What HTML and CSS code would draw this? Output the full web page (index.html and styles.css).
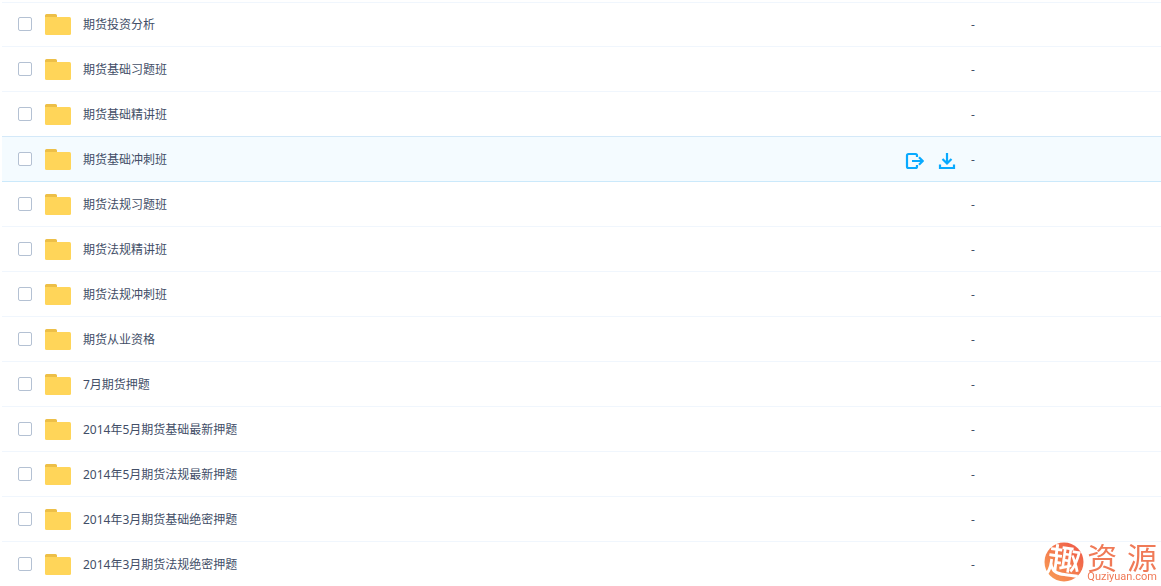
FILE: index.html
```
<!DOCTYPE html>
<html lang="zh-CN">
<head>
<meta charset="utf-8">
<meta name="viewport" content="width=device-width, initial-scale=1">
<title>期货</title>
<link rel="stylesheet" href="styles.css">
</head>
<body>
<svg class="defs" width="0" height="0" aria-hidden="true">
  <symbol id="folder" viewBox="0 0 26 21">
    <path d="M0 1.5A1.5 1.5 0 0 1 1.500 0H10.500A1.500 1.500 0 0 1 12 1.500V6H0Z" fill="#edbf47"/>
    <path d="M0 3H24.500A1.500 1.500 0 0 1 26 4.500V19.500A1.500 1.500 0 0 1 24.500 21H1.500A1.500 1.500 0 0 1 0 19.500Z" fill="#ffd559"/>
  </symbol>
</svg>
<ul class="files">
  <li class="row"><input class="check" type="checkbox" id="f1"><svg class="folder"><use href="#folder"/></svg><label class="name" for="f1">期货投资分析</label><span class="size">-</span></li>
  <li class="row"><input class="check" type="checkbox" id="f2"><svg class="folder"><use href="#folder"/></svg><label class="name" for="f2">期货基础习题班</label><span class="size">-</span></li>
  <li class="row"><input class="check" type="checkbox" id="f3"><svg class="folder"><use href="#folder"/></svg><label class="name" for="f3">期货基础精讲班</label><span class="size">-</span></li>
  <li class="row row-active"><input class="check" type="checkbox" id="f4"><svg class="folder"><use href="#folder"/></svg><label class="name" for="f4">期货基础冲刺班</label>
    <span class="actions">
      <button class="action" type="button" aria-label="分享"><svg width="20" height="18" viewBox="0 0 20 18" fill="none" stroke="#09aaff" stroke-width="2.200"><path d="M13 5V3.500Q13 2 11.500 2H4.500Q3 2 3 3.500V14.500Q3 16 4.500 16H11.500Q13 16 13 14.500V13M8 9H18.500M15 5.200L18.800 9L15 12.800"/></svg></button>
      <button class="action" type="button" aria-label="下载"><svg width="18" height="18" viewBox="0 0 18 18" fill="none" stroke="#09aaff" stroke-width="2.200"><path d="M9 1V11M4.500 7L9 11.500L13.500 7M2 12.500V16H16V12.500"/></svg></button>
    </span>
    <span class="size">-</span></li>
  <li class="row"><input class="check" type="checkbox" id="f5"><svg class="folder"><use href="#folder"/></svg><label class="name" for="f5">期货法规习题班</label><span class="size">-</span></li>
  <li class="row"><input class="check" type="checkbox" id="f6"><svg class="folder"><use href="#folder"/></svg><label class="name" for="f6">期货法规精讲班</label><span class="size">-</span></li>
  <li class="row"><input class="check" type="checkbox" id="f7"><svg class="folder"><use href="#folder"/></svg><label class="name" for="f7">期货法规冲刺班</label><span class="size">-</span></li>
  <li class="row"><input class="check" type="checkbox" id="f8"><svg class="folder"><use href="#folder"/></svg><label class="name" for="f8">期货从业资格</label><span class="size">-</span></li>
  <li class="row"><input class="check" type="checkbox" id="f9"><svg class="folder"><use href="#folder"/></svg><label class="name" for="f9">7月期货押题</label><span class="size">-</span></li>
  <li class="row"><input class="check" type="checkbox" id="f10"><svg class="folder"><use href="#folder"/></svg><label class="name" for="f10">2014年5月期货基础最新押题</label><span class="size">-</span></li>
  <li class="row"><input class="check" type="checkbox" id="f11"><svg class="folder"><use href="#folder"/></svg><label class="name" for="f11">2014年5月期货法规最新押题</label><span class="size">-</span></li>
  <li class="row"><input class="check" type="checkbox" id="f12"><svg class="folder"><use href="#folder"/></svg><label class="name" for="f12">2014年3月期货基础绝密押题</label><span class="size">-</span></li>
  <li class="row"><input class="check" type="checkbox" id="f13"><svg class="folder"><use href="#folder"/></svg><label class="name" for="f13">2014年3月期货法规绝密押题</label><span class="size">-</span></li>
</ul>
<div class="brand">
  <svg class="brand-mark" width="40" height="40" viewBox="0 0 40 40">
    <defs><linearGradient id="glow" x1="0" y1="1" x2="1" y2="0"><stop offset="0" stop-color="#f9a055"/><stop offset="1" stop-color="#ee5547"/></linearGradient></defs>
    <circle cx="20" cy="20" r="19.500" fill="url(#glow)"/>
    <text class="brand-glyph" x="20" y="32" text-anchor="middle" transform="rotate(8 20 20)">趣</text>
  </svg>
  <div class="brand-text">
    <div class="brand-name"><span>资</span><span>源</span></div>
    <div class="brand-site">Quziyuan.com</div>
  </div>
</div>
</body>
</html>
```
FILE: styles.css
```
* {
  box-sizing: border-box;
}

body {
  margin: 0;
  background: #fff;
  color: #424e67;
  font: 12px/18px "Noto Sans", "Noto Sans CJK SC", sans-serif;
}

.defs {
  position: absolute;
}

.files {
  margin: 0;
  padding: 2px 0 0 2px;
  list-style: none;
}

.row {
  display: flex;
  align-items: center;
  height: 45px;
  padding-left: 16px;
  border-bottom: 1px solid #f0f6fd;
}

.row:first-child {
  padding-bottom: 1px;
  border-top: 1px solid #f0f6fd;
}

.row:last-child {
  height: 44px;
  border-bottom: 0;
}

.row-active {
  height: 46px;
  margin-top: -1px;
  background: #f4fbff;
  border-top: 1px solid #d4e9f9;
  border-bottom-color: #cbe9fb;
}

.check {
  appearance: none;
  flex: none;
  width: 14px;
  height: 14px;
  margin: 0 13px 0 0;
  background: #fff;
  border: 1px solid #b4c1d3;
  border-radius: 2px;
}

.folder {
  flex: none;
  width: 26px;
  height: 21px;
  margin-right: 12px;
}

.name {
  flex: 1;
  padding-top: 2px;
}

.actions {
  display: flex;
  gap: 14px;
  padding: 4px 15px 0 0;
}

.action {
  display: flex;
  padding: 0;
  border: 0;
  background: none;
  cursor: pointer;
}

.size {
  flex: none;
  width: 190px;
  padding-top: 2px;
}

.brand {
  position: fixed;
  right: 4px;
  bottom: 3px;
  display: flex;
  align-items: center;
  gap: 3px;
  color: #f07a57;
}

.brand-mark {
  overflow: visible;
}

.brand-glyph {
  fill: #fff;
  font: 500 34px "Noto Sans CJK SC", sans-serif;
}

.brand-name {
  display: flex;
  justify-content: space-between;
  font: 30px/30px "Noto Sans CJK SC", sans-serif;
}

.brand-site {
  font: 11px/12px Roboto, sans-serif;
}
```
